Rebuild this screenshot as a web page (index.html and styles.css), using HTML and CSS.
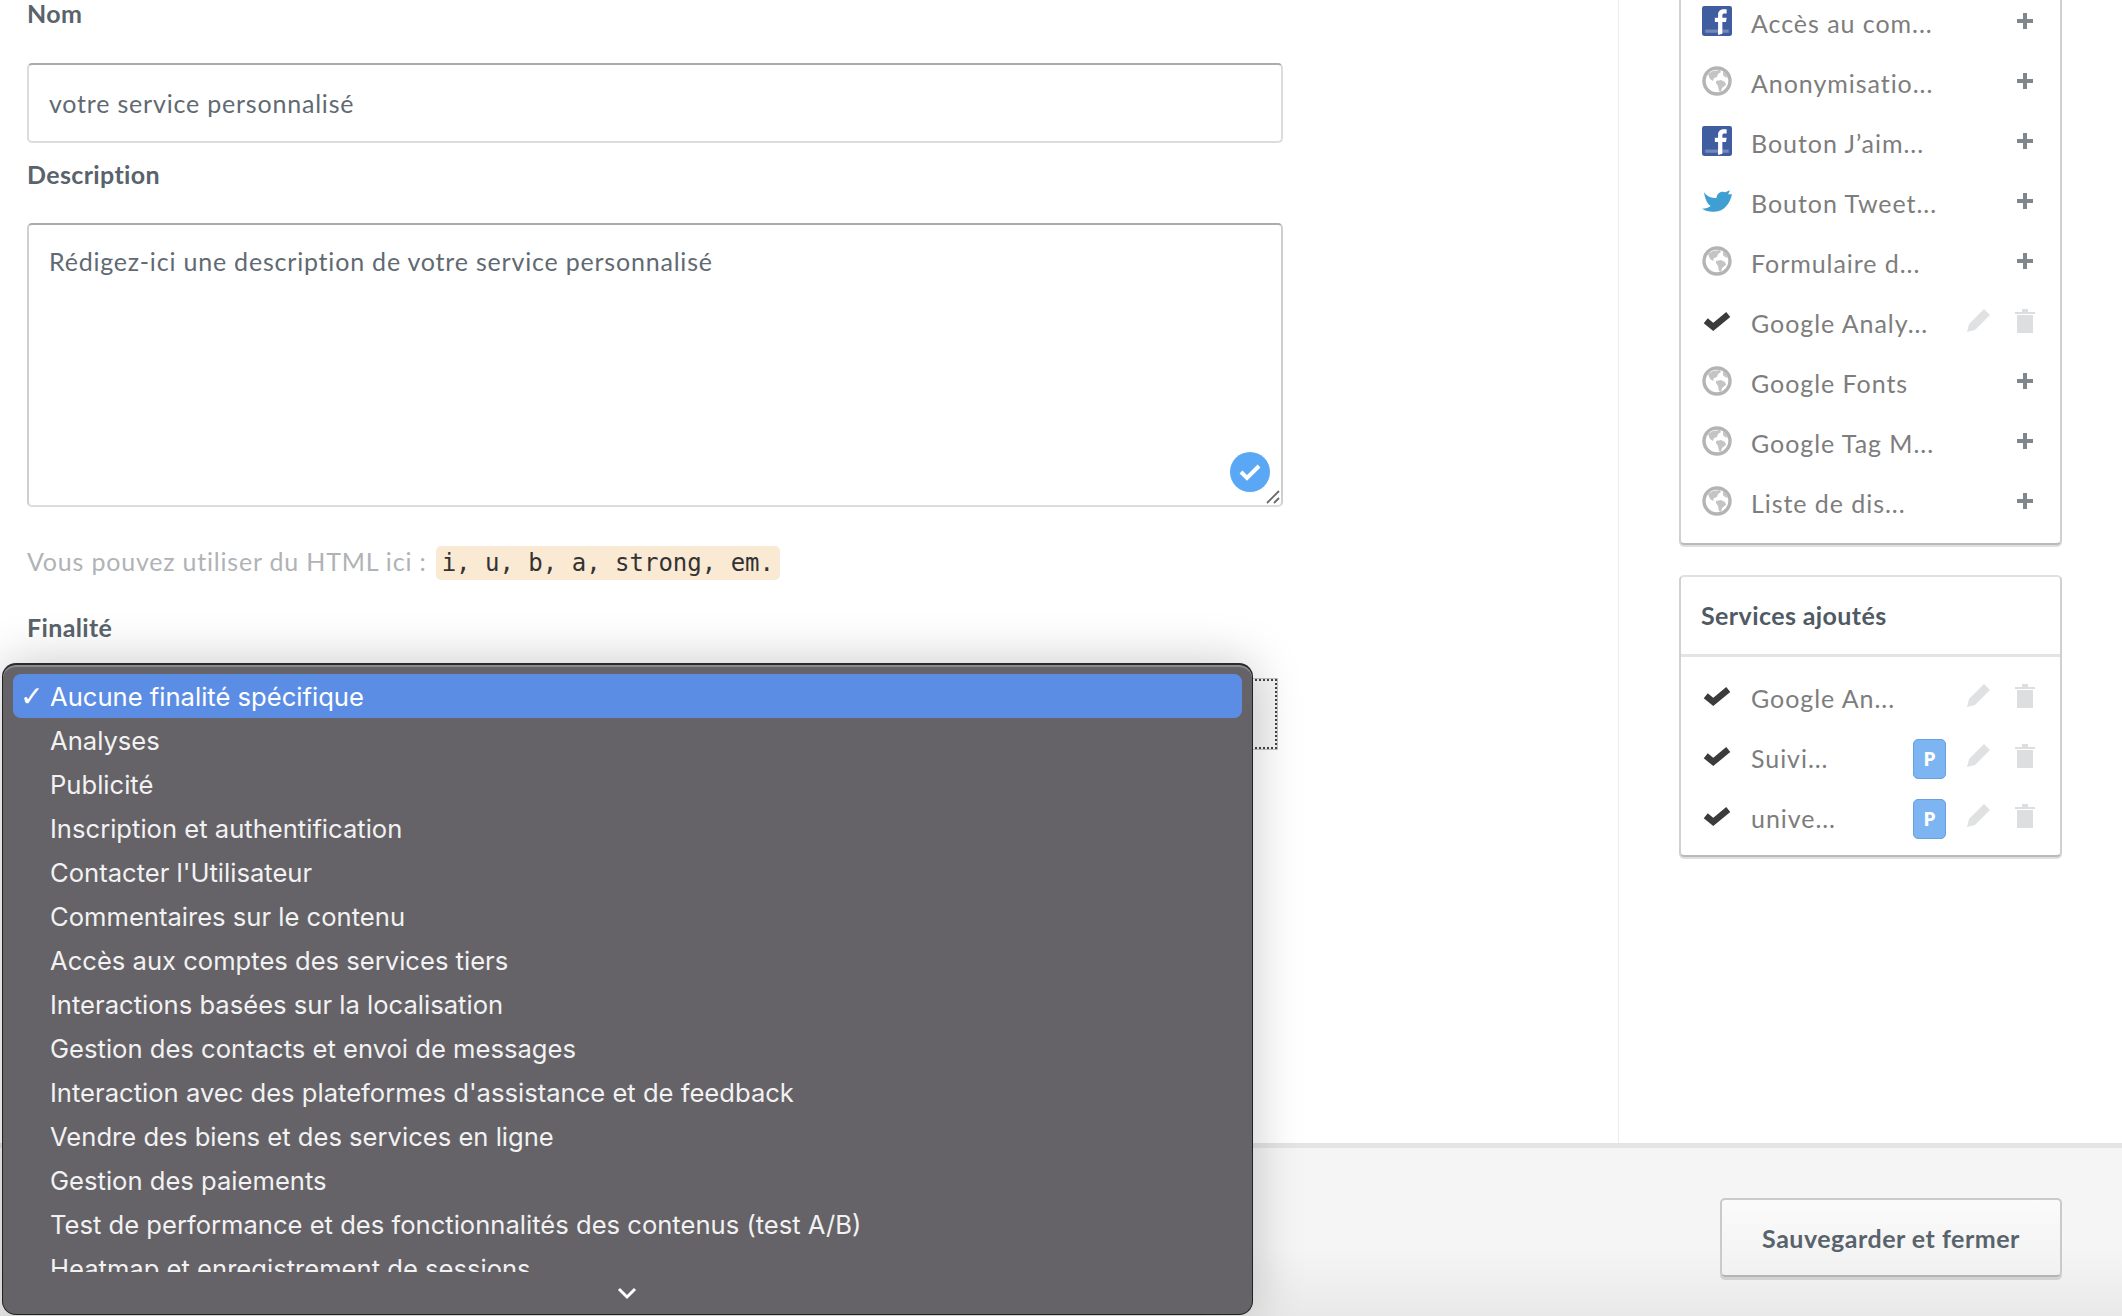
FILE: index.html
```html
<!DOCTYPE html>
<html lang="fr">
<head>
<meta charset="utf-8">
<title>Service personnalisé</title>
<link rel="stylesheet" href="styles.css">
</head>
<body>
<svg class="defs" width="0" height="0" aria-hidden="true">
  <symbol id="i-fb" viewBox="0 0 28 28">
    <rect width="28" height="28" rx="2" fill="#3f5d9f"/>
    <rect x="3" y="22" width="22" height="3" fill="#7388b8"/>
    <path d="M15 27V15h-3v-4h3V8c0-3 2-5 5-5h3v4h-2c-1.400 0-2 .6-2 2v2h4l-.6 4H19v11z" fill="#fff"/>
  </symbol>
  <symbol id="i-globe" viewBox="0 0 30 30">
    <circle cx="15" cy="15" r="13" fill="#fff" stroke="#b4b4b4" stroke-width="3.400"/>
    <path d="M6 8l5-3 7-1 1 2-3 2-1 3-3 1-1 3-3-2zM14 15l5-1 4 2 1 3-4 3-1 4-2-1-1-5-2-3zM21 5l3 3 2 4-3-1-2-2z" fill="#c4c4c4"/>
  </symbol>
  <symbol id="i-tw" viewBox="0 0 31 24">
    <path d="M2 3C6 8 10 9 15 9 15 4 20 1 24 3L29 1 27 5 31 5C29 14 23 24 11 23 7 23 3 22 0 20 4 20 7 19 9 17 5 15 3 9 2 3z" fill="#3f9fd2"/>
  </symbol>
  <symbol id="i-check" viewBox="0 0 24 18">
    <path d="M3 8l6 5L21 3" fill="none" stroke="#3b3b3b" stroke-width="5"/>
  </symbol>
  <symbol id="i-plus" viewBox="0 0 16 16">
    <path d="M8 0v16M0 8h16" fill="none" stroke="#7f868c" stroke-width="4"/>
  </symbol>
  <symbol id="i-pen" viewBox="0 0 24 24">
    <path d="M0 24l2-8L17 1l6 6L8 22z" fill="#dfe1e2"/>
  </symbol>
  <symbol id="i-trash" viewBox="0 0 20 25">
    <path d="M0 4h7V1h6v3h7v2H0zM2 7h16v18H2z" fill="#dcdedf"/>
  </symbol>
</svg>

<div class="page">
  <main class="main">
    <section class="form">
      <label class="label">Nom</label>
      <div class="input">votre service personnalisé</div>
      <label class="label">Description</label>
      <div class="textarea">
        <span>Rédigez-ici une description de votre service personnalisé</span>
        <span class="valid">
          <svg width="24" height="20" viewBox="0 0 24 20"><path d="M3 10l6 6L21 4" fill="none" stroke="#fff" stroke-width="4"/></svg>
        </span>
        <svg class="grip" width="14" height="14" viewBox="0 0 14 14"><path d="M1 13L13 1M8 13l5-5" fill="none" stroke="#6b6b6b" stroke-width="1.800"/></svg>
      </div>
      <p class="hint">Vous pouvez utiliser du HTML ici : <code class="chip">i, u, b, a, strong, em.</code></p>
      <label class="label">Finalité</label>
      <div class="select"></div>
    </section>

    <aside class="side">
      <div class="card card-top">
        <div class="row"><svg class="ico blur"><use href="#i-fb"/></svg><span class="name">Accès au com...</span><svg class="plus blur"><use href="#i-plus"/></svg></div>
        <div class="row"><svg class="ico blur"><use href="#i-globe"/></svg><span class="name">Anonymisatio...</span><svg class="plus blur"><use href="#i-plus"/></svg></div>
        <div class="row"><svg class="ico blur"><use href="#i-fb"/></svg><span class="name">Bouton J’aim...</span><svg class="plus blur"><use href="#i-plus"/></svg></div>
        <div class="row"><svg class="ico blur"><use href="#i-tw"/></svg><span class="name">Bouton Tweet...</span><svg class="plus blur"><use href="#i-plus"/></svg></div>
        <div class="row"><svg class="ico blur"><use href="#i-globe"/></svg><span class="name">Formulaire d...</span><svg class="plus blur"><use href="#i-plus"/></svg></div>
        <div class="row"><svg class="ico blur check"><use href="#i-check"/></svg><span class="name">Google Analy...</span><svg class="pen blur"><use href="#i-pen"/></svg><svg class="trash blur"><use href="#i-trash"/></svg></div>
        <div class="row"><svg class="ico blur"><use href="#i-globe"/></svg><span class="name">Google Fonts</span><svg class="plus blur"><use href="#i-plus"/></svg></div>
        <div class="row"><svg class="ico blur"><use href="#i-globe"/></svg><span class="name">Google Tag M...</span><svg class="plus blur"><use href="#i-plus"/></svg></div>
        <div class="row"><svg class="ico blur"><use href="#i-globe"/></svg><span class="name">Liste de dis...</span><svg class="plus blur"><use href="#i-plus"/></svg></div>
      </div>

      <div class="card card-added">
        <h3 class="card-title">Services ajoutés</h3>
        <div class="card-body">
          <div class="row"><svg class="ico blur check"><use href="#i-check"/></svg><span class="name">Google An...</span><svg class="pen blur"><use href="#i-pen"/></svg><svg class="trash blur"><use href="#i-trash"/></svg></div>
          <div class="row"><svg class="ico blur check"><use href="#i-check"/></svg><span class="name">Suivi...</span><span class="badge">P</span><svg class="pen blur"><use href="#i-pen"/></svg><svg class="trash blur"><use href="#i-trash"/></svg></div>
          <div class="row"><svg class="ico blur check"><use href="#i-check"/></svg><span class="name">unive...</span><span class="badge">P</span><svg class="pen blur"><use href="#i-pen"/></svg><svg class="trash blur"><use href="#i-trash"/></svg></div>
        </div>
      </div>
    </aside>
  </main>

  <footer class="footer">
    <button class="save" type="button">Sauvegarder et fermer</button>
  </footer>

  <div class="popup">
    <ul class="options">
      <li class="opt opt-on"><span class="tick">✓</span>Aucune finalité spécifique</li>
      <li class="opt">Analyses</li>
      <li class="opt">Publicité</li>
      <li class="opt">Inscription et authentification</li>
      <li class="opt">Contacter l'Utilisateur</li>
      <li class="opt">Commentaires sur le contenu</li>
      <li class="opt">Accès aux comptes des services tiers</li>
      <li class="opt">Interactions basées sur la localisation</li>
      <li class="opt">Gestion des contacts et envoi de messages</li>
      <li class="opt">Interaction avec des plateformes d'assistance et de feedback</li>
      <li class="opt">Vendre des biens et des services en ligne</li>
      <li class="opt">Gestion des paiements</li>
      <li class="opt">Test de performance et des fonctionnalités des contenus (test A/B)</li>
      <li class="opt">Heatmap et enregistrement de sessions</li>
    </ul>
    <svg class="chevron" width="20" height="14" viewBox="0 0 20 14"><path d="M2 3l8 8 8-8" fill="none" stroke="#fff" stroke-width="3"/></svg>
  </div>
</div>
</body>
</html>
```
FILE: styles.css
```css
* { box-sizing: border-box; }
html, body { margin: 0; padding: 0; background: #fff; }
body { font-family: "Lato", "Open Sans", sans-serif; overflow: hidden; }
.defs { position: absolute; }

.page { position: relative; width: 2122px; height: 1316px; display: flex; flex-direction: column; overflow: hidden; }
.main { height: 1143px; display: flex; overflow: hidden; }

.form { width: 1619px; padding-left: 27px; padding-right: 335px; border-right: 1px solid #ececec; display: flex; flex-direction: column; }
.label { display: block; font-size: 25px; line-height: 28px; font-weight: 700; color: #59636c; letter-spacing: .35px; margin-bottom: 35px; }
.label:first-child { line-height: 26px; margin-bottom: 37px; }

.input, .textarea { border: 2px solid #dcdcdc; border-top-color: #a9acae; border-radius: 5px; font-size: 25px; letter-spacing: .8px; color: #5f6a72; background: #fff; }
.input { height: 80px; line-height: 76px; padding-left: 20px; margin-bottom: 17px; }
.textarea { position: relative; height: 284px; line-height: 34px; padding: 19px 20px; margin-bottom: 37px; border-left-color: #cfcfcf; border-right-color: #cfcfcf; }
.valid { position: absolute; right: 11px; bottom: 13px; width: 40px; height: 40px; border-radius: 50%; background: #5aa8f5; display: flex; align-items: center; justify-content: center; }
.grip { position: absolute; right: 1px; bottom: 1px; }

.hint { margin: 0 0 33px; font-size: 25px; line-height: 34px; letter-spacing: .8px; color: #b0b3b6; }
.chip { display: inline-block; height: 34px; padding: 0 6px; border-radius: 5px; background: #fae9d3; color: #333; font-family: "DejaVu Sans Mono", "Liberation Mono", monospace; font-size: 24px; letter-spacing: 0; line-height: 34px; margin-left: 2px; }
.select { margin-top: 3px; margin-right: 6px; height: 70px; border: 2px dotted #444; box-shadow: 0 0 0 1px #c4c4c4; background: #f6f6f6; }

.side { flex: 1; padding-left: 60px; margin-top: -7px; }
.card { width: 383px; background: #fff; border: 2px solid #d0d0d0; border-top-color: #e0e0e0; border-radius: 5px; box-shadow: 0 2px 0 #dedede; border-bottom-color: #b9b9b9; }
.card-top { padding-bottom: 10px; border-top: 0; border-radius: 0 0 5px 5px; margin-bottom: 30px; height: 552px; }
.card-title { margin: 0; height: 80px; line-height: 76px; padding-left: 20px; font-size: 25px; font-weight: 700; letter-spacing: .4px; color: #4f5a64; border-bottom: 3px solid #e4e4e4; }
.card-body { padding: 11px 0 7px; }

.row { height: 60px; display: flex; align-items: center; padding-left: 21px; }
.ico { width: 30px; height: 30px; flex: none; margin-right: 19px; margin-top: -4px; }
.check { margin-top: -3px; }
.name { flex: 1; font-size: 25px; color: #7d7d7d; letter-spacing: .95px; white-space: nowrap; }
.blur { filter: blur(.5px); }
.plus { width: 16px; height: 16px; flex: none; margin-right: 27px; margin-top: -5px; }
.pen { width: 24px; height: 24px; flex: none; margin-right: 24px; margin-left: 1px; margin-top: -6px; }
.trash { width: 20px; height: 25px; flex: none; margin-right: 25px; margin-top: -6px; }
.badge { width: 33px; height: 40px; flex: none; margin-right: 20px; margin-top: 1px; border-radius: 5px; background: #7db4f2; border: 1px solid #68a0e0; color: #fff; font-family: "Open Sans", sans-serif; font-weight: 700; font-size: 20px; line-height: 38px; text-align: center; }

.footer { flex: 1; border-top: 5px solid #e4e4e4; background: linear-gradient(#f5f5f5 60%, #e9e9e9); display: flex; justify-content: flex-end; align-items: flex-start; padding: 50px 60px 0 0; }
.save { width: 342px; height: 79px; padding-top: 2px; border: 2px solid #cacaca; border-bottom-color: #b4b4b4; border-radius: 5px; box-shadow: 0 3px 0 #d2d2d2; background: linear-gradient(#fbfbfb, #f1f1f1); font-family: "Lato", sans-serif; font-weight: 700; font-size: 25px; letter-spacing: .5px; color: #59636c; }

.popup { position: absolute; left: 2px; top: 663px; width: 1251px; height: 652px; background: #656368; border: 1px solid #222; border-top: 2px solid #2a2a2a; border-radius: 14px; box-shadow: inset 0 2px 0 #8b8a8d, 0 0 50px rgba(0,0,0,.22); padding: 9px 10px 0; color: #f2f2f2; font-family: "Inter", sans-serif; font-size: 25.6px; }
.options { list-style: none; margin: 0; padding: 0; height: 598px; overflow: hidden; }
.opt { position: relative; height: 44px; line-height: 45px; padding-left: 37px; white-space: nowrap; }
.opt-on { background: #5c8de4; border-radius: 8px; color: #fff; }
.tick { position: absolute; left: 7px; top: 0; font-family: "DejaVu Sans", sans-serif; font-size: 28px; font-weight: 700; }
.chevron { display: block; margin: 14px 0 0 604px; }
```
